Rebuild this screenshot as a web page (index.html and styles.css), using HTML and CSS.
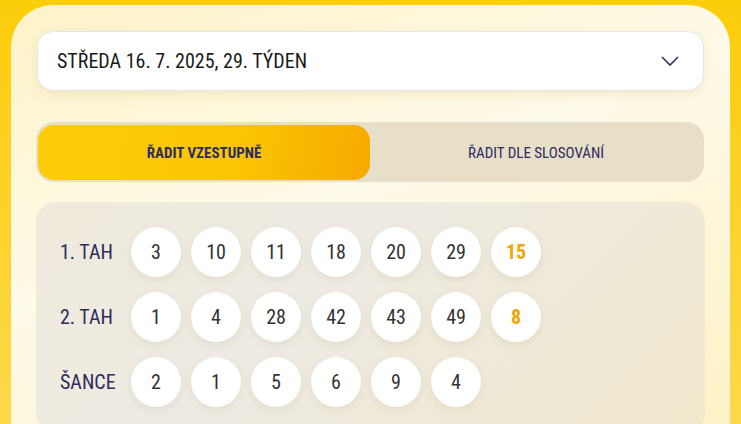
FILE: index.html
```html
<!doctype html>
<html lang="cs">
<head>
    <meta charset="UTF-8">
    <title>Výsledky losování</title>
    <link rel="stylesheet" href="styles.css">
</head>
<body>
    <div class="card">
        <div class="select">
            <span class="select-text">STŘEDA 16. 7. 2025, 29. TÝDEN</span>
            <svg class="chevron" width="18" height="10" viewBox="0 0 18 10">
                <path d="M1 1 L9 9 L17 1" fill="none" stroke="#2e2b5f" stroke-width="1.6"/>
            </svg>
        </div>

        <div class="toggle">
            <button class="toggle-btn active">ŘADIT VZESTUPNĚ</button>
            <button class="toggle-btn">ŘADIT DLE SLOSOVÁNÍ</button>
        </div>

        <div class="results">
            <div class="row">
                <div class="label">1. TAH</div>
                <div class="ball">3</div>
                <div class="ball">10</div>
                <div class="ball">11</div>
                <div class="ball">18</div>
                <div class="ball">20</div>
                <div class="ball">29</div>
                <div class="ball extra">15</div>
            </div>
            <div class="row">
                <div class="label">2. TAH</div>
                <div class="ball">1</div>
                <div class="ball">4</div>
                <div class="ball">28</div>
                <div class="ball">42</div>
                <div class="ball">43</div>
                <div class="ball">49</div>
                <div class="ball extra">8</div>
            </div>
            <div class="row">
                <div class="label">ŠANCE</div>
                <div class="ball">2</div>
                <div class="ball">1</div>
                <div class="ball">5</div>
                <div class="ball">6</div>
                <div class="ball">9</div>
                <div class="ball">4</div>
            </div>
        </div>
    </div>
</body>
</html>
```

FILE: styles.css
```css
html {
    overflow: hidden;
}
body {
    margin: 0;
    padding: 5px 11px 0;
    height: 424px;
    box-sizing: border-box;
    overflow: hidden;
    background: linear-gradient(180deg, #fccd0a 0%, #fdd84a 100%);
    font-family: 'Roboto', 'Liberation Sans', sans-serif;
    font-stretch: condensed;
}
.card {
    background: linear-gradient(160deg, #fdf3c8 0%, #fefae8 45%, #fdf1c6 100%);
    border-radius: 42px 42px 0 0;
    padding: 26px 25px 0;
    height: 419px;
    box-sizing: border-box;
    overflow: hidden;
}
.select {
    display: flex;
    align-items: center;
    justify-content: space-between;
    height: 60px;
    box-sizing: border-box;
    margin: 0 1px;
    padding: 0 24px 0 19px;
    background: #ffffff;
    border: 1px solid #e6e4ea;
    border-radius: 16px;
    box-shadow: 0 4px 12px rgba(180, 150, 60, 0.15);
}
.select-text {
    color: #1b1b1b;
    font-size: 20px;
}
.toggle {
    display: flex;
    margin: 31px 1px 0 0;
    padding: 3px 2px 2px;
    background: #e7dfc8;
    border-radius: 18px;
}
.toggle-btn {
    flex: 1;
    height: 55px;
    border: none;
    border-radius: 16px;
    background: transparent;
    color: #2e2b5f;
    font-family: inherit;
    font-stretch: condensed;
    font-size: 15px;
    cursor: pointer;
}
.toggle-btn.active {
    background: linear-gradient(100deg, #fccd0a 0%, #fbc503 60%, #f6a900 100%);
    font-weight: bold;
}
.results {
    margin-top: 20px;
    padding: 25px 24px;
    background: linear-gradient(135deg, #efeadb 0%, #eeebe4 40%, #f1e8cc 100%);
    border-radius: 20px;
    display: flex;
    flex-direction: column;
    gap: 15px;
}
.row {
    display: flex;
    align-items: center;
    gap: 10px;
}
.label {
    width: 61px;
    color: #2e2b5f;
    font-size: 20px;
}
.ball {
    width: 50px;
    height: 50px;
    border-radius: 50%;
    background: #ffffff;
    display: flex;
    align-items: center;
    justify-content: center;
    color: #333333;
    font-size: 20px;
    box-shadow: 0 3px 8px rgba(160, 140, 90, 0.15);
}
.ball.extra {
    color: #f5a500;
    font-weight: bold;
}
```
